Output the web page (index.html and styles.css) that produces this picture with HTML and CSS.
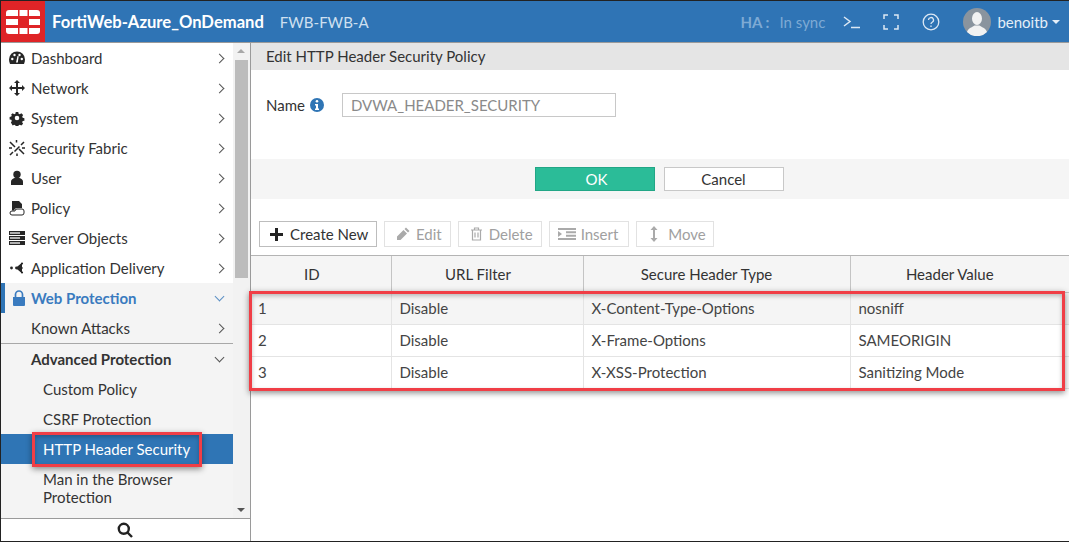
FILE: index.html
```html
<!DOCTYPE html>
<html lang="en">
<head>
  <meta charset="utf-8">
  <title>FortiWeb - Edit HTTP Header Security Policy</title>
  <link rel="stylesheet" href="styles.css">
</head>
<body>
  <div class="app">
    <header class="topbar">
      <div class="logo">
        <svg width="34" height="24" viewBox="0 0 34 24" fill="#fff">
          <path d="M3 0h9v6H0V3a3 3 0 0 1 3-3z"/>
          <rect x="13.500" y="0" width="8" height="6"/>
          <path d="M23 0h8a3 3 0 0 1 3 3v3H23z"/>
          <rect x="0" y="9" width="12" height="6"/>
          <rect x="23" y="9" width="11" height="6"/>
          <path d="M0 18h12v6H3a3 3 0 0 1-3-3z"/>
          <rect x="13.500" y="18" width="8" height="6"/>
          <path d="M23 18h11v3a3 3 0 0 1-3 3h-8z"/>
        </svg>
      </div>
      <span class="device">FortiWeb-Azure_OnDemand</span>
      <span class="host">FWB-FWB-A</span>
      <div class="top-right">
        <span class="ha"><b>HA :</b><span>In sync</span></span>
        <svg class="top-icon cli" width="18" height="14" viewBox="0 0 18 14" fill="none" stroke="#dce8f4" stroke-width="1.500">
          <path d="M1 2l6 4.500L1 11"/>
          <path d="M8 12.500h9"/>
        </svg>
        <svg class="top-icon full" width="16" height="16" viewBox="0 0 16 16" fill="none" stroke="#dce8f4" stroke-width="1.500">
          <path d="M1 5V1h4M11 1h4v4M15 11v4h-4M5 15H1v-4"/>
        </svg>
        <svg class="top-icon help" width="18" height="18" viewBox="0 0 18 18" fill="none" stroke="#dce8f4" stroke-width="1.300">
          <circle cx="9" cy="9" r="7.800"/>
          <path d="M6.500 7a2.500 2.500 0 1 1 3.700 2.200c-.8.500-1.200.9-1.200 1.900"/>
          <path d="M9 12.500v1.500"/>
        </svg>
        <svg class="avatar" width="28" height="28" viewBox="0 0 28 28">
          <circle cx="14" cy="14" r="14" fill="#8a949e"/>
          <ellipse cx="14" cy="10.500" rx="5" ry="6.500" fill="#f2f2f2"/>
          <path d="M4 24c1-4 6-5 7.500-6.500h5C18 19 23 20 24 24a14 14 0 0 1-20 0z" fill="#f2f2f2"/>
        </svg>
        <span class="user">benoitb</span>
        <span class="caret"></span>
      </div>
    </header>

    <div class="content">
      <aside class="sidebar">
        <div class="sidebar-body">
          <nav class="menu">
            <a class="item">
              <svg class="nav-icon" viewBox="0 0 16 16"><path d="M0 9.500a8 8 0 0 1 16 0c0 1.700-.4 3.100-1 4.500H1c-.6-1.400-1-2.800-1-4.500z"/><circle cx="3.300" cy="9" r="1.200" fill="#fff"/><circle cx="5.500" cy="5" r="1.200" fill="#fff"/><circle cx="10.500" cy="5" r="1.200" fill="#fff"/><circle cx="12.800" cy="9" r="1.200" fill="#fff"/><path d="M7 12.500L8.500 6l1.200.3-.9 6.200z" fill="#fff"/></svg>
              <span>Dashboard</span><i class="chev"></i>
            </a>
            <a class="item">
              <svg class="nav-icon" viewBox="0 0 16 16"><path d="M8 0l3 3H9v4h4V5l3 3-3 3V9H9v4h2l-3 3-3-3h2V9H3v2L0 8l3-3v2h4V3H5z"/></svg>
              <span>Network</span><i class="chev"></i>
            </a>
            <a class="item">
              <svg class="nav-icon" viewBox="0 0 16 16"><path fill-rule="evenodd" d="M6.500 1h3l.4 2 1.400.6 1.800-1.100 2.100 2.100-1.100 1.800.6 1.400 2 .4v3l-2 .4-.6 1.400 1.100 1.800-2.100 2.100-1.800-1.100-1.400.6-.4 2h-3l-.4-2-1.400-.6-1.800 1.100L.8 13.300l1.100-1.800-.6-1.400-2-.4v-3l2-.4.6-1.400L.8 4.600l2.100-2.100 1.800 1.100 1.400-.6zM8 5.300a2.700 2.700 0 1 0 0 5.400 2.700 2.700 0 0 0 0-5.400z" transform="translate(1.200 1.200) scale(.85)"/></svg>
              <span>System</span><i class="chev"></i>
            </a>
            <a class="item">
              <svg class="nav-icon" viewBox="0 0 16 16" fill="none" stroke="#262626" stroke-width="1.500"><path d="M1 2l5 5M10 9l5 5M15 2l-3 3M10.500 6.500L5.500 11.500M4 12l-3 3M7.500 0v2.500M0 8h3M13 8h3M8 13.500V16"/></svg>
              <span>Security Fabric</span><i class="chev"></i>
            </a>
            <a class="item">
              <svg class="nav-icon" viewBox="0 0 16 16"><circle cx="8" cy="4.500" r="3.700"/><path d="M2 15v-3.500C2 9.500 4 8.500 5.500 8h5c1.500.5 3.500 1.500 3.500 3.500V15z"/></svg>
              <span>User</span><i class="chev"></i>
            </a>
            <a class="item">
              <svg class="nav-icon" viewBox="0 0 16 16"><path d="M3 1h7l3 3v4H8a3 3 0 0 0-3 2.500H3z"/><path d="M3 11h3a2 2 0 0 1 2-2h5a2 2 0 0 1 2 2v2a2 2 0 0 1-2 2H3a2 2 0 0 1-2-2 2 2 0 0 1 2-2z" fill="#fff" stroke="#262626" stroke-width="1"/></svg>
              <span>Policy</span><i class="chev"></i>
            </a>
            <a class="item">
              <svg class="nav-icon" viewBox="0 0 16 16"><rect y="1" width="16" height="4"/><rect y="6" width="16" height="4"/><rect y="11" width="16" height="4"/><rect x="1" y="2" width="10" height="2" fill="#b0b0b0"/><rect x="1" y="7" width="10" height="2" fill="#b0b0b0"/><rect x="1" y="12" width="10" height="2" fill="#b0b0b0"/></svg>
              <span>Server Objects</span><i class="chev"></i>
            </a>
            <a class="item">
              <svg class="nav-icon" viewBox="0 0 16 16" fill="none" stroke="#262626" stroke-width="1.100"><path d="M13 3.500L7.500 8l5.500 4.500M7.500 8H14"/><circle cx="2.500" cy="8" r="1.400" fill="#262626" stroke="none"/><circle cx="7.500" cy="8" r="1.400" fill="#262626" stroke="none"/><circle cx="13" cy="3.500" r="1.100" fill="#262626" stroke="none"/><circle cx="13" cy="12.500" r="1.100" fill="#262626" stroke="none"/></svg>
              <span>Application Delivery</span><i class="chev"></i>
            </a>
            <div class="open-group">
              <a class="item active">
                <svg class="nav-icon" viewBox="0 0 16 16"><path d="M2 7h12v8a1 1 0 0 1-1 1H3a1 1 0 0 1-1-1z"/><path d="M4.500 7V4.500a3.500 3.500 0 0 1 7 0V7" fill="none" stroke="#3a7bbf" stroke-width="1.700"/></svg>
                <span>Web Protection</span><i class="chev down blue"></i>
              </a>
              <a class="item">
                <span>Known Attacks</span><i class="chev"></i>
              </a>
              <div class="section">
                <a class="item section-head">
                  <span>Advanced Protection</span><i class="chev down"></i>
                </a>
                <a class="item sub">Custom Policy</a>
                <a class="item sub">CSRF Protection</a>
                <a class="item sub selected">HTTP Header Security</a>
                <a class="item sub two-line">Man in the Browser Protection</a>
              </div>
            </div>
          </nav>
          <div class="scrollbar">
            <span class="arrow up"></span>
            <div class="thumb"></div>
            <span class="arrow dn"></span>
          </div>
        </div>
        <div class="searchbar">
          <svg width="16" height="16" viewBox="0 0 16 16" fill="none" stroke="#222" stroke-width="2.400">
            <circle cx="6.800" cy="6.800" r="5"/>
            <path d="M10.500 10.500l4.500 4.500"/>
          </svg>
        </div>
      </aside>

      <main class="main">
        <div class="title-bar">Edit HTTP Header Security Policy</div>
        <div class="form">
          <label class="name-label">Name</label>
          <svg class="info" width="14" height="14" viewBox="0 0 14 14">
            <circle cx="7" cy="7" r="7" fill="#2f75b5"/>
            <circle cx="7" cy="3.300" r="1.300" fill="#fff"/>
            <path d="M5 6h3v4.500h1V12H5v-1.500h1V7.500H5z" fill="#fff"/>
          </svg>
          <input class="name-input" type="text" value="DVWA_HEADER_SECURITY" disabled>
        </div>
        <div class="form-actions">
          <button class="btn-ok">OK</button>
          <button class="btn-cancel">Cancel</button>
        </div>
        <div class="toolbar">
          <button class="tool primary">
            <svg width="13" height="13" viewBox="0 0 13 13" fill="#222"><path d="M5 0h3v5h5v3H8v5H5V8H0V5h5z"/></svg>
            Create New
          </button>
          <button class="tool">
            <svg width="14" height="14" viewBox="0 0 14 14" fill="#aaa"><path d="M10 .5l3.500 3.500-1.500 1.500L8.500 2zM7.500 3L11 6.500 4.500 13H1v-3.500z"/></svg>
            Edit
          </button>
          <button class="tool">
            <svg width="13" height="14" viewBox="0 0 13 14" fill="none" stroke="#aaa" stroke-width="1.200"><path d="M1 3h11M4.500 3V1h4v2M2.500 3v10h8V3M5 5.500v5M8 5.500v5"/></svg>
            Delete
          </button>
          <button class="tool tool-insert">
            <svg width="18" height="12" viewBox="0 0 18 12" fill="#aaa"><path d="M0 0h18v2H0zM8 3.300h10v2H8zM8 6.700h10v2H8zM0 10h18v2H0zM0 3l4 3-4 3z"/></svg>
            Insert
          </button>
          <button class="tool tool-move">
            <svg width="8" height="16" viewBox="0 0 8 16" fill="#aaa"><path d="M4 0l3.500 4H5v8h2.500L4 16 .5 12H3V4H.5z"/></svg>
            Move
          </button>
        </div>
        <table class="rules">
          <thead>
            <tr>
              <th class="c-id">ID</th>
              <th class="c-url">URL Filter</th>
              <th class="c-type">Secure Header Type</th>
              <th class="c-value">Header Value</th>
            </tr>
          </thead>
          <tbody>
            <tr class="hover">
              <td>1</td><td>Disable</td><td>X-Content-Type-Options</td><td>nosniff</td>
            </tr>
            <tr>
              <td>2</td><td>Disable</td><td>X-Frame-Options</td><td>SAMEORIGIN</td>
            </tr>
            <tr>
              <td>3</td><td>Disable</td><td>X-XSS-Protection</td><td>Sanitizing Mode</td>
            </tr>
          </tbody>
        </table>
      </main>
    </div>

    <div class="mark mark-menu"></div>
    <div class="mark mark-rows"></div>
  </div>
</body>
</html>
```
FILE: styles.css
```css
* {
  box-sizing: border-box;
}

html, body {
  margin: 0;
  padding: 0;
}

body {
  font-family: Lato, "Open Sans", sans-serif;
  font-size: 15px;
  color: #333;
  background: #fff;
}

.app {
  position: relative;
  width: 1069px;
  height: 542px;
  border: 1px solid #222;
  border-right: 0;
  display: flex;
  flex-direction: column;
  overflow: hidden;
}

/* top bar */
.topbar {
  height: 42px;
  flex: none;
  display: flex;
  align-items: center;
  background: #2f74b5;
  border-bottom: 1px solid #9a9a9a;
  color: #fff;
}

.logo {
  width: 44px;
  height: 41px;
  background: #df2427;
  display: flex;
  align-items: center;
  justify-content: center;
}

.device {
  margin-left: 7px;
  font-size: 16.600px;
  font-weight: 700;
}

.host {
  margin-left: 16px;
  font-size: 15px;
  color: #cfe0f0;
}

.top-right {
  margin-left: auto;
  display: flex;
  align-items: center;
}

.ha {
  display: flex;
  gap: 10px;
  color: #7eaad4;
  font-size: 15px;
}

.top-icon {
  display: block;
}

.cli {
  margin-left: 18px;
}

.full {
  margin-left: 22px;
}

.help {
  margin-left: 23px;
}

.avatar {
  margin-left: 23px;
}

.user {
  margin-left: 6px;
  font-size: 15px;
  color: #e4eef8;
}

.caret {
  margin: 0 9px 0 4px;
  border-left: 4px solid transparent;
  border-right: 4px solid transparent;
  border-top: 4px solid #e4eef8;
}

/* sidebar */
.content {
  flex: 1;
  display: flex;
  min-height: 0;
}

.sidebar {
  width: 250px;
  flex: none;
  display: flex;
  flex-direction: column;
  border-right: 1px solid #9a9a9a;
}

.sidebar-body {
  flex: 1;
  display: flex;
  min-height: 0;
}

.menu {
  width: 232px;
  flex: none;
}

.item {
  display: flex;
  align-items: center;
  height: 30px;
  padding: 0 7px 0 8px;
  color: #333;
}

.item > span {
  flex: 1;
}

.nav-icon {
  width: 16px;
  height: 16px;
  margin-right: 6px;
  fill: #262626;
  flex: none;
}

.chev {
  width: 7px;
  height: 7px;
  margin-right: 3px;
  border-top: 1.500px solid #555;
  border-right: 1.500px solid #555;
  transform: rotate(45deg);
}

.chev.down {
  margin-top: -4px;
  transform: rotate(135deg);
}

.chev.blue {
  border-color: #5b8fc4;
}

.open-group {
  background: #f4f4f4;
}

.open-group .item {
  padding-left: 30px;
}

.open-group .item.active {
  border-left: 4px solid #2f74b5;
  padding-left: 6px;
  color: #3a7bbf;
  font-weight: 700;
}

.open-group .item.active .nav-icon {
  margin-right: 4px;
  fill: #3a7bbf;
}

.section {
  border-top: 1px solid #a8a8a8;
  height: 175px;
}

.open-group .section-head {
  font-weight: 700;
}

.open-group .sub {
  padding-left: 42px;
}

.open-group .selected {
  background: #2f75b5;
  color: #fff;
}

.open-group .two-line {
  height: 54px;
  align-items: flex-start;
  padding-top: 6px;
  padding-right: 50px;
  line-height: 18px;
}

.scrollbar {
  flex: 1;
  position: relative;
  background: #f2f2f2;
  padding-top: 17px;
}

.thumb {
  width: 13px;
  height: 218px;
  margin-left: 2px;
  background: #bcbcbc;
}

.arrow {
  position: absolute;
  left: 4px;
  border-left: 4px solid transparent;
  border-right: 4px solid transparent;
}

.arrow.up {
  top: 6px;
  border-bottom: 4px solid #a8a8a8;
}

.arrow.dn {
  bottom: 6px;
  border-top: 4px solid #555;
}

.searchbar {
  height: 23px;
  flex: none;
  border-top: 1px solid #9a9a9a;
  display: flex;
  align-items: center;
  justify-content: center;
  padding-right: 1px;
}

/* main panel */
.main {
  flex: 1;
  min-width: 0;
}

.title-bar {
  height: 27px;
  padding-left: 15px;
  background: #e5e5e5;
  line-height: 27px;
}

.form {
  height: 89px;
  display: flex;
  align-items: flex-start;
  padding: 23px 0 0 15px;
}

.name-label {
  line-height: 24px;
}

.info {
  margin: 5px 0 0 5px;
}

.name-input {
  width: 274px;
  height: 24px;
  margin-left: 18px;
  padding: 0 8px;
  border: 1px solid #c8c8c8;
  background: #fff;
  font: 15px Lato, sans-serif;
  color: #8a8a8a;
}

.form-actions {
  height: 40px;
  display: flex;
  align-items: center;
  justify-content: center;
  gap: 9px;
  background: #f5f5f5;
  padding-right: 2px;
}

.btn-ok, .btn-cancel {
  width: 120px;
  height: 24px;
  padding: 0;
  font: 15px Lato, sans-serif;
}

.btn-ok {
  padding-left: 4px;
  background: #2bbc98;
  border: 1px solid #22a686;
  color: #fff;
}

.btn-cancel {
  background: #fff;
  border: 1px solid #c8c8c8;
  color: #333;
}

.toolbar {
  display: flex;
  gap: 7px;
  height: 57px;
  padding: 22px 0 0 8px;
  border-bottom: 1px solid #b4b4b4;
}

.tool {
  height: 26px;
  display: flex;
  align-items: center;
  gap: 6px;
  padding: 0 8px 0 11px;
  background: #fff;
  border: 1px solid #e2e2e2;
  font: 15px Lato, sans-serif;
  color: #a0a0a0;
}

.tool.primary {
  width: 118px;
  padding: 0 7px 0 10px;
  gap: 7px;
  border-color: #bdbdbd;
  color: #333;
}

.tool-insert {
  padding: 0 10px 0 8px;
  gap: 5px;
}

.tool-move {
  padding: 0 7px 0 13px;
  gap: 10px;
}

.rules {
  width: 100%;
  border-collapse: collapse;
  table-layout: fixed;
}

.rules th {
  height: 36px;
  padding: 1px 0 0;
  background: #f5f5f5;
  border-right: 1px solid #c4c4c4;
  border-bottom: 1px solid #c4c4c4;
  font-weight: 400;
  text-align: center;
}

.rules th:last-child, .rules td:last-child {
  border-right: 0;
}

.rules th.c-id {
  width: 140px;
  padding-right: 18px;
}

.rules th.c-url {
  width: 192px;
  padding-right: 18px;
}

.rules th.c-type {
  width: 267px;
  padding-right: 20px;
}

.rules th.c-value {
  padding-right: 20px;
}

.rules td {
  height: 32px;
  padding: 0 7px;
  border-right: 1px solid #e4e4e4;
  border-bottom: 1px solid #e4e4e4;
  color: #444;
}

.rules td + td {
  padding-left: 8px;
}

.rules .hover td {
  background: #f5f5f5;
}

/* red callouts drawn over the screenshot */
.mark {
  position: absolute;
  border: 3px solid #f03e46;
  box-shadow: 0 2px 6px rgba(0, 0, 0, .45), inset 0 2px 4px rgba(0, 0, 0, .25);
}

.mark-menu {
  left: 31px;
  top: 431px;
  width: 170px;
  height: 35px;
}

.mark-rows {
  left: 248px;
  top: 290px;
  width: 816px;
  height: 100px;
}
```
